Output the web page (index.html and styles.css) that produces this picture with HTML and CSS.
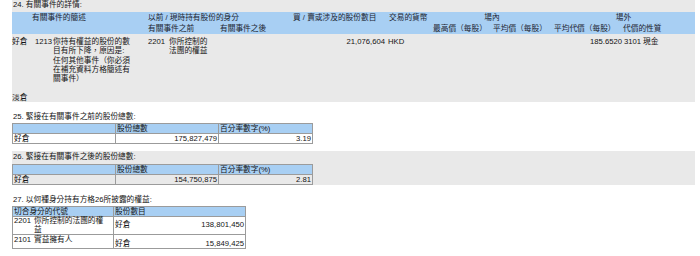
FILE: index.html
```html
<!DOCTYPE html>
<html lang="zh-Hant">
<head>
<meta charset="utf-8">
<title>有關事件的詳情</title>
<link rel="stylesheet" href="styles.css">
</head>
<body>
<section class="sec gray s24">
  <div class="title">24. 有關事件的詳情:</div>
  <table class="ev">
    <colgroup>
      <col class="c-a"><col class="c-b"><col class="c-c"><col class="c-d"><col class="c-e"><col class="c-f"><col class="c-g"><col class="c-h"><col class="c-i"><col class="c-j"><col class="c-k"><col class="c-l"><col class="c-m">
    </colgroup>
    <tr class="hd hd1">
      <th colspan="3" class="p20">有關事件的簡述</th>
      <th colspan="3" class="p2">以前 / 現時持有股份的身分</th>
      <th class="p3">買 / 賣或涉及的股份數目</th>
      <th class="p2">交易的貨幣</th>
      <th colspan="2" class="ctr">場內</th>
      <th colspan="3" class="ctr">場外</th>
    </tr>
    <tr class="hd hd2">
      <th colspan="3"></th>
      <th colspan="2" class="p2">有關事件之前</th>
      <th class="p2">有關事件之後</th>
      <th></th>
      <th></th>
      <th class="p1">最高價（每股）</th>
      <th class="p1">平均價（每股）</th>
      <th class="p2">平均代價（每股）</th>
      <th colspan="2" class="p0">代價的性質</th>
    </tr>
    <tr class="data">
      <td class="p0">好倉</td>
      <td class="p2">1213</td>
      <td class="p0">你持有權益的股份的數<br>目有所下降，原因是:<br>任何其他事件（你必須<br>在補充資料方格簡述有<br>關事件）</td>
      <td class="p2">2201</td>
      <td class="p2">你所控制的<br>法團的權益</td>
      <td></td>
      <td class="num pr2">21,076,604</td>
      <td class="p1">HKD</td>
      <td></td>
      <td></td>
      <td class="num pr1">185.6520</td>
      <td class="p1">3101</td>
      <td class="p1">現金</td>
    </tr>
  </table>
  <div class="short">淡倉</div>
</section>

<section class="sec s25">
  <div class="title">25. 緊接在有關事件之前的股份總數:</div>
  <table class="grid g3">
    <tr class="ghd"><th></th><th>股份總數</th><th>百分率數字(%)</th></tr>
    <tr class="grow"><td>好倉</td><td class="num">175,827,479</td><td class="num">3.19</td></tr>
  </table>
</section>

<section class="sec gray s26">
  <div class="title">26. 緊接在有關事件之後的股份總數:</div>
  <table class="grid g3">
    <tr class="ghd"><th></th><th>股份總數</th><th>百分率數字(%)</th></tr>
    <tr class="grow"><td>好倉</td><td class="num">154,750,875</td><td class="num">2.81</td></tr>
  </table>
</section>

<section class="sec s27">
  <div class="title">27. 以何種身分持有方格26所披露的權益:</div>
  <table class="grid g2">
    <tr class="ghd"><th>切合身分的代號</th><th>股份數目</th></tr>
    <tr class="r1">
      <td class="cap"><span class="code">2201</span><span class="desc">你所控制的法團的權<br>益</span></td>
      <td class="pos"><div class="split"><span>好倉</span><span>138,801,450</span></div></td>
    </tr>
    <tr class="r2">
      <td class="cap"><span class="code">2101</span><span class="desc">實益擁有人</span></td>
      <td class="pos"><div class="split"><span>好倉</span><span>15,849,425</span></div></td>
    </tr>
  </table>
</section>
</body>
</html>
```

FILE: styles.css
```css
html, body {
  margin: 0;
  padding: 0;
  background: #ffffff;
}
body {
  padding: 0 5px 0 12px;
  font-family: "Liberation Sans", "Noto Sans CJK TC", sans-serif;
  font-size: 7.7px;
  line-height: 9.3px;
  color: #141414;
}
.sec {
  display: block;
}
.gray {
  background: #e9e9e9;
}
.title {
  height: 12px;
  line-height: 10px;
  padding-left: 1px;
  white-space: nowrap;
}

/* section 24 */
.s24 {
  height: 102px;
}
.ev {
  border-collapse: collapse;
  table-layout: fixed;
  width: 683px;
}
.ev th, .ev td {
  padding: 0;
  font-weight: normal;
  text-align: left;
  vertical-align: top;
  white-space: nowrap;
  overflow: visible;
}
.c-a { width: 21px; }
.c-b { width: 20px; }
.c-c { width: 93px; }
.c-d { width: 21px; }
.c-e { width: 51px; }
.c-f { width: 72px; }
.c-g { width: 97px; }
.c-h { width: 45px; }
.c-i { width: 60px; }
.c-j { width: 60px; }
.c-k { width: 71px; }
.c-l { width: 19px; }
.c-m { width: 53px; }
.hd th {
  background: #a8cff3;
  color: #1c2430;
}
.hd1 th { height: 10px; padding-top: 1px; }
.hd2 th { height: 10px; padding-top: 1px; }
.ev th.ctr { text-align: center; }
.p0 { padding-left: 0; }
.ev .p1 { padding-left: 1px; }
.ev .p2 { padding-left: 2px; }
.ev .p3 { padding-left: 3px; }
.ev .p20 { padding-left: 20px; }
.ev .num { text-align: right; }
.ev .pr2 { padding-right: 2px; }
.ev .pr1 { padding-right: 1px; }
.data td { padding-top: 3px; }
.short {
  margin-top: 10px;
  line-height: 10px;
}

/* small grids */
.grid {
  border-collapse: collapse;
  table-layout: fixed;
}
.grid th, .grid td {
  border: 1px solid #9b9b9b;
  padding: 0 1px;
  font-weight: normal;
  text-align: left;
  white-space: nowrap;
  line-height: 9px;
}
.grid .num { text-align: right; }
.g3 { width: 301px; }
.g3 th:nth-child(1), .g3 td:nth-child(1) { width: 100px; }
.g3 th:nth-child(2), .g3 td:nth-child(2) { width: 100px; }
.ghd th {
  background: #a8cff3;
  height: 8px;
}
.grow td {
  height: 9px;
  background: #ffffff;
}
.s26 .grow td { background: transparent; }

.s25 { margin-top: 10px; }
.s25 .title { height: 11px; }
.s26 {
  margin-top: 7px;
  padding-top: 1px;
  height: 33px;
}
.s26 .title { height: 12px; }
.s27 { margin-top: 10px; }
.s27 .title { height: 11px; }

.g2 { width: 234px; }
.g2 th:nth-child(1), .g2 td:nth-child(1) { width: 98px; }
.g2 td { vertical-align: top; }
.cap .code { display: inline-block; vertical-align: top; width: 20px; }
.cap .desc { display: inline-block; vertical-align: top; }
.g2 .r1 td { height: 16px; line-height: 8.5px; }
.r1 .pos { vertical-align: middle; }
.g2 .r2 td { height: 13px; }
.r2 td.pos { vertical-align: bottom; }
.split {
  display: flex;
  justify-content: space-between;
}
```
